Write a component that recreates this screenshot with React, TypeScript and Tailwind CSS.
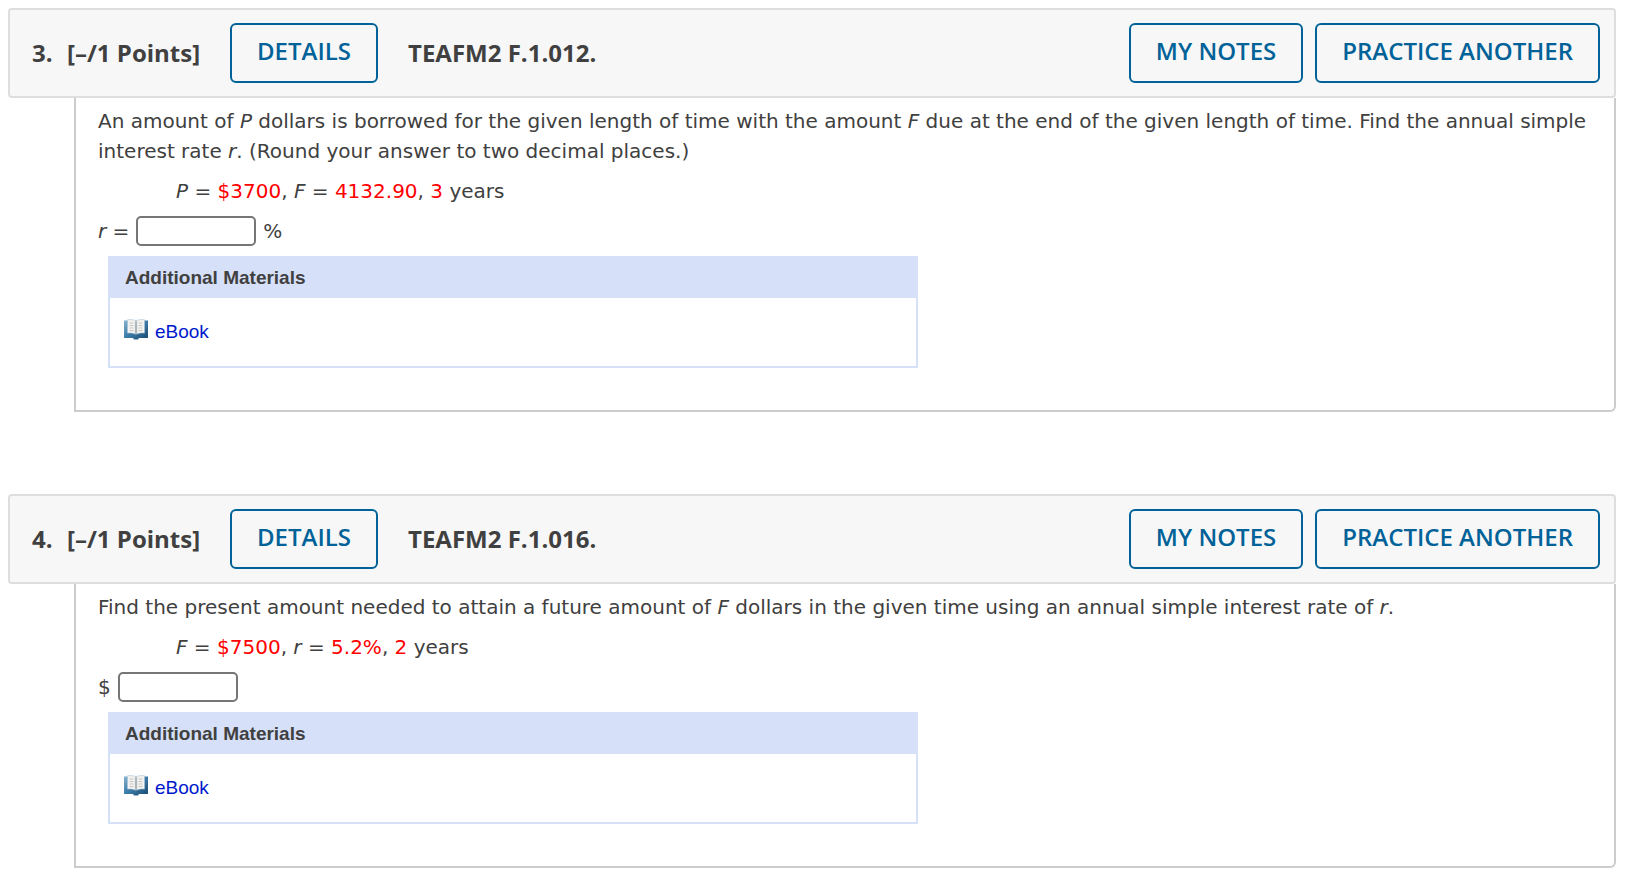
import React from "react";

const BookIcon = ({ id }: { id: string }) => (
  <svg width="24" height="22" viewBox="0 0 24 22" aria-hidden="true">
    <defs>
      <linearGradient id={id} x1="0" y1="0" x2="1" y2="1">
        <stop offset="0" stopColor="#86b4cf" />
        <stop offset="0.45" stopColor="#3f7fab" />
        <stop offset="1" stopColor="#174a70" />
      </linearGradient>
    </defs>
    <path d="M0 1.500h24v17.500h-9l-1 1.500h-4l-1-1.500H0z" fill={`url(#${id})`} />
    <path
      d="M3.500.8c3-.4 6-.2 8.500.8 2.500-1 5.500-1.200 8.500-.8v13.200c-3-.2-6 0-8.500 1.300-2.500-1.300-5.500-1.500-8.500-1.300z"
      fill="#f4f4f2"
      stroke="#a9c3d2"
      strokeWidth="0.600"
    />
    <path d="M10.800 2l1.200.5 1.200-.5v12.300L12 15l-1.200-.7z" fill="#d0d3d4" />
    <path d="M12 2.500v12.500" stroke="#7e909d" strokeWidth="0.900" />
    <path
      d="M5.500 4h4M5.500 6.500h4M5.500 9h4M5.500 11.500h4M18.500 4h-4M18.500 6.500h-4M18.500 9h-4M18.500 11.500h-4"
      stroke="#c4c4c2"
      strokeWidth="1"
    />
  </svg>
);

const Value = ({ children }: { children: React.ReactNode }) => (
  <span className="text-[#ff0000]">{children}</span>
);

const HeaderButton = ({ children }: { children: React.ReactNode }) => (
  <button
    type="button"
    className="h-15 shrink-0 rounded-md border-2 border-[#006298] px-[25px] pb-1 text-2xl font-semibold whitespace-nowrap text-[#006298]"
  >
    {children}
  </button>
);

const Materials = ({ id }: { id: string }) => (
  <div className="mt-2.5 ml-2.5 w-[810px] max-w-full border-2 border-[#d6e0f8] font-['Liberation_Sans',Arial,sans-serif] text-[19px]">
    <h3 className="h-10 bg-[#d6e0f8] px-[15px] leading-10 font-bold">
      Additional Materials
    </h3>
    <div className="flex h-[68px] items-start px-3.5 pt-[21px]">
      <a href="#ebook" className="flex gap-[7px] text-[#0018cc]">
        <BookIcon id={id} />
        <span className="leading-[26px]">eBook</span>
      </a>
    </div>
  </div>
);

type QuestionProps = {
  number: number;
  code: string;
  text: React.ReactNode;
  given: React.ReactNode;
  before: React.ReactNode;
  after?: string;
};

const Question = ({ number, code, text, given, before, after }: QuestionProps) => (
  <section>
    <header className="flex min-h-[90px] items-center rounded-sm border-2 border-[#dedede] bg-[#f7f7f7] pr-3.5 pl-[22px] font-['Open_Sans',sans-serif] text-2xl">
      <h2 className="flex items-center font-bold whitespace-nowrap">
        <span className="w-[35px]">{number}.</span>
        <span className="w-[163px]">[–/1 Points]</span>
      </h2>
      <HeaderButton>DETAILS</HeaderButton>
      <span className="ml-[30px] font-bold whitespace-nowrap">{code}</span>
      <div className="ml-auto flex gap-3">
        <HeaderButton>MY NOTES</HeaderButton>
        <HeaderButton>PRACTICE ANOTHER</HeaderButton>
      </div>
    </header>
    <div className="ml-[66px] rounded-br-md border-2 border-t-0 border-[#cccccc] px-[22px] pt-2 pb-[42px] text-[20px] leading-[30px]">
      <p>{text}</p>
      <p className="mt-2.5 pl-[78px]">{given}</p>
      <div className="mt-2.5 flex items-center gap-[7px]">
        <label htmlFor={`answer-${number}`}>{before}</label>
        <input
          id={`answer-${number}`}
          type="text"
          className="h-[30px] w-[120px] rounded-[5px] border-2 border-[#767676] bg-white px-1"
        />
        {after && <span>{after}</span>}
      </div>
      <Materials id={`book-${number}`} />
    </div>
  </section>
);

const App = () => {
  return (
    <main className="flex flex-col gap-[82px] bg-white pt-2 pr-4 pb-1 pl-2 font-['DejaVu_Sans',Verdana,sans-serif] text-[#404040]">
      <Question
        number={3}
        code="TEAFM2 F.1.012."
        text={
          <>
            An amount of <i>P</i> dollars is borrowed for the given length of
            time with the amount <i>F</i> due at the end of the given length of
            time. Find the annual simple interest rate <i>r</i>. (Round your
            answer to two decimal places.)
          </>
        }
        given={
          <>
            <i>P</i> = <Value>$3700</Value>, <i>F</i> = <Value>4132.90</Value>,{" "}
            <Value>3</Value> years
          </>
        }
        before={
          <>
            <i>r</i> =
          </>
        }
        after="%"
      />
      <Question
        number={4}
        code="TEAFM2 F.1.016."
        text={
          <>
            Find the present amount needed to attain a future amount of{" "}
            <i>F</i> dollars in the given time using an annual simple interest
            rate of <i>r</i>.
          </>
        }
        given={
          <>
            <i>F</i> = <Value>$7500</Value>, <i>r</i> = <Value>5.2%</Value>,{" "}
            <Value>2</Value> years
          </>
        }
        before="$"
      />
    </main>
  );
};

export default App;
